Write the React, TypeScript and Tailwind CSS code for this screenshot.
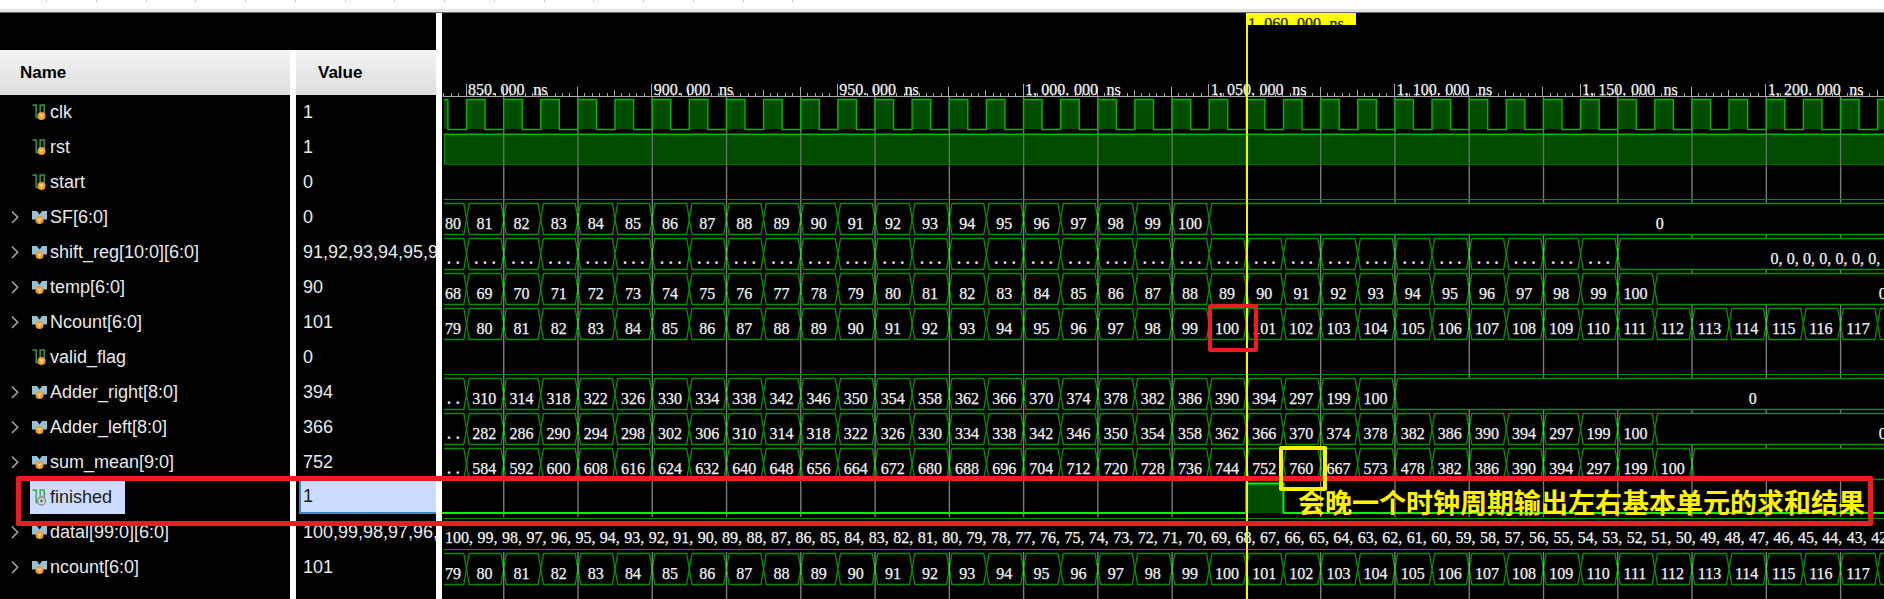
import React from "react";

const PX_PER_NS = 3.7135;
const VIEW_START = 2;
const tx = (t: number) => 24.5 + (t - 850) * PX_PER_NS;
const END = 1293;
const CELL = 8.15;

type Cell = { from: number; to: number; label: string };
type Signal = {
  name: string;
  value: string;
  kind: "bit" | "bus";
  selected?: boolean;
  wave: React.ReactNode;
};

const GREEN = "#009200";
const BRIGHT = "#00b800";
const FILL = "#004d00";
const gridTimes = Array.from({ length: 22 }, (_, i) => 860 + i * 20);

/* Lays text out on the half-width character grid of the viewer. */
function GridText({ x, y, text, fill = "#f2f2f2" }: { x: number; y: number; text: string; fill?: string }) {
  const runs: { at: number; s: string }[] = [];
  let i = 0;
  for (const m of text.match(/[^,. ]*[,. ]?/g) ?? []) {
    if (!m) continue;
    runs.push({ at: i, s: m });
    i += m.length;
  }
  return (
    <text
      y={y}
      fill={fill}
      stroke={fill}
      strokeWidth="0.25"
      className="font-['Liberation_Serif',serif] text-[16px]"
    >
      {runs.map((r) => (
        <tspan key={r.at} x={x + r.at * CELL}>
          {r.s}
        </tspan>
      ))}
    </text>
  );
}

function GridLines({ height, opacity = 1 }: { height: number; opacity?: number }) {
  return (
    <g fill="#7a7a7a" opacity={opacity}>
      {gridTimes.map((t) => (
        <rect key={t} x={tx(t) - 0.6} y="0" width="1.4" height={height} />
      ))}
    </g>
  );
}

function Row({ children }: { children?: React.ReactNode }) {
  return <svg className="block h-[35px] w-full shrink-0 overflow-hidden">{children}</svg>;
}

function Clock() {
  let edge = `M${VIEW_START} 2.5H${tx(845)}V32.5`;
  const highs: number[] = [];
  for (let t = 850; t < END; t += 10) {
    edge += `H${tx(t)}V2.5H${tx(t + 5)}V32.5`;
    highs.push(t);
  }
  return (
    <Row>
      <GridLines height={35} />
      <rect x={VIEW_START} y="2" width={tx(845) - VIEW_START} height="30" fill={FILL} />
      {highs.map((t) => (
        <rect key={t} x={tx(t)} y="2" width={5 * PX_PER_NS} height="30" fill={FILL} />
      ))}
      <path d={edge} fill="none" stroke={BRIGHT} strokeWidth="1.4" />
    </Row>
  );
}

function High() {
  return (
    <Row>
      <rect x={VIEW_START} y="2" width="100%" height="30" fill={FILL} />
      <rect x={VIEW_START} y="2" width="1" height="30" fill={GREEN} />
      <rect x={VIEW_START} y="32" width="100%" height="1" fill="#006a00" />
      <rect x={VIEW_START} y="1.5" width="100%" height="1.5" fill={BRIGHT} />
      <GridLines height={35} opacity={0.8} />
    </Row>
  );
}

function Low() {
  return (
    <Row>
      <GridLines height={35} />
      <rect x={VIEW_START} y="32" width="100%" height="1" fill={GREEN} />
    </Row>
  );
}

function Pulse({ from, to }: { from: number; to: number }) {
  return (
    <Row>
      <GridLines height={35} />
      <rect x={tx(from)} y="1" width={tx(to) - tx(from)} height="30" fill={FILL} />
      <path
        d={`M0 31H${tx(from)}V1.5H${tx(to)}V31H${tx(END)}`}
        fill="none"
        stroke="#00f400"
        strokeWidth="2"
      />
    </Row>
  );
}

function Bus({ cells }: { cells: Cell[] }) {
  return (
    <Row>
      <GridLines height={35} />
      {cells.map((c) => {
        const first = c.from < 850;
        const a = first ? VIEW_START : tx(c.from);
        const b = tx(c.to);
        const d = first
          ? `M${a} 1.5H${b - 2.7}L${b} 17L${b - 2.7} 32.5H${a}`
          : `M${a} 17L${a + 2.7} 1.5H${b - 2.7}L${b} 17L${b - 2.7} 32.5H${a + 2.7}Z`;
        const w = c.label.length * CELL;
        const x = first ? a + 1 : (a + b) / 2 - w / 2 - 0.5;
        return (
          <g key={c.from}>
            <path d={d} fill="#000" stroke={GREEN} strokeWidth="1.3" />
            {c.label.startsWith(".") ? (
              <text
                y={27}
                fill="#f2f2f2"
                className="font-['Liberation_Serif',serif] text-[16px] font-bold"
              >
                {c.label.split("").map((dot, i) => (
                  <tspan key={i} x={x + 2 + i * 8.7}>
                    {dot}
                  </tspan>
                ))}
              </text>
            ) : (
              <GridText x={x} y={27} text={c.label} />
            )}
          </g>
        );
      })}
      {cells
        .filter((c) => c.to % 20 === 0)
        .map((c) => (
          <rect key={c.to} x={tx(c.to) - 0.6} y="11" width="1.4" height="12" fill="#45d045" />
        ))}
    </Row>
  );
}

function WideBus({ text }: { text: string }) {
  return (
    <Row>
      <rect x={VIEW_START} y="1" width="100%" height="1" fill={GREEN} />
      <rect x={VIEW_START} y="32" width="100%" height="1" fill={GREEN} />
      <GridText x={3} y={26} text={text} />
    </Row>
  );
}

const range = (from: number, count: number, step = 1) =>
  Array.from({ length: count }, (_, i) => String(from + i * step));

function toCells(head: string, labels: string[], tail?: string): Cell[] {
  const cells: Cell[] = [{ from: 840, to: 850, label: head }];
  labels.forEach((label, i) => cells.push({ from: 850 + i * 10, to: 860 + i * 10, label }));
  if (tail !== undefined) cells.push({ from: 850 + labels.length * 10, to: END, label: tail });
  return cells;
}

const counter = toCells("79", range(80, 44));
const countdown = range(100, 70, -1).join(",");

const signals: Signal[] = [
  { name: "clk", value: "1", kind: "bit", wave: <Clock /> },
  { name: "rst", value: "1", kind: "bit", wave: <High /> },
  { name: "start", value: "0", kind: "bit", wave: <Low /> },
  { name: "SF[6:0]", value: "0", kind: "bus", wave: <Bus cells={toCells("80", range(81, 20), "0")} /> },
  {
    name: "shift_reg[10:0][6:0]",
    value: "91,92,93,94,95,96,97",
    kind: "bus",
    wave: <Bus cells={toCells("..", Array(31).fill("..."), "0,0,0,0,0,0,0,0,0,0,0,0")} />,
  },
  { name: "temp[6:0]", value: "90", kind: "bus", wave: <Bus cells={toCells("68", range(69, 32), "0")} /> },
  { name: "Ncount[6:0]", value: "101", kind: "bus", wave: <Bus cells={counter} /> },
  { name: "valid_flag", value: "0", kind: "bit", wave: <Low /> },
  {
    name: "Adder_right[8:0]",
    value: "394",
    kind: "bus",
    wave: <Bus cells={toCells("..", [...range(310, 22, 4), "297", "199", "100"], "0")} />,
  },
  {
    name: "Adder_left[8:0]",
    value: "366",
    kind: "bus",
    wave: <Bus cells={toCells("..", [...range(282, 29, 4), "297", "199", "100"], "0")} />,
  },
  {
    name: "sum_mean[9:0]",
    value: "752",
    kind: "bus",
    wave: (
      <Bus
        cells={toCells(
          "..",
          [...range(584, 23, 8), "667", "573", "478", "382", "386", "390", "394", "297", "199", "100"],
          "0"
        )}
      />
    ),
  },
  { name: "finished", value: "1", kind: "bit", selected: true, wave: <Pulse from={1060} to={1070} /> },
  { name: "datal[99:0][6:0]", value: "100,99,98,97,96,95", kind: "bus", wave: <WideBus text={countdown} /> },
  { name: "ncount[6:0]", value: "101", kind: "bus", wave: <Bus cells={counter} /> },
];

function Badge({ cx, cy }: { cx: number; cy: number }) {
  return (
    <g>
      <circle cx={cx} cy={cy} r="4" fill="#f39a2d" />
      <path
        d={`M${cx - 1.6} ${cy - 1.6}L${cx} ${cy + 0.4}L${cx + 1.6} ${cy - 1.6}M${cx} ${cy + 0.4}V${cy + 2.2}`}
        stroke="#ffe9c4"
        strokeWidth="1.1"
        fill="none"
      />
    </g>
  );
}

function BitIcon({ selected }: { selected?: boolean }) {
  return (
    <svg viewBox="0 0 16 18" className="h-[18px] w-4 shrink-0" aria-hidden="true">
      <path
        d="M0.5 2.2H4.2V14.5H8.2V2.2H12.2V11"
        fill="none"
        stroke={selected ? "#4fae62" : "#2f8a3e"}
        strokeWidth="1.7"
      />
      {selected ? (
        <g>
          <circle cx="9.5" cy="13" r="4" fill="#d6d6d6" stroke="#8c8c8c" strokeWidth="1.3" />
          <circle cx="9.5" cy="13" r="1.4" fill="#6a6a6a" />
        </g>
      ) : (
        <Badge cx={9.5} cy={13} />
      )}
    </svg>
  );
}

function BusIcon() {
  return (
    <svg viewBox="0 0 16 18" className="h-[18px] w-4 shrink-0" aria-hidden="true">
      <path d="M0 3H5L7.5 6.5L10 3H15V11.5H0Z" fill="#93c1d8" />
      <Badge cx={7.5} cy={12} />
    </svg>
  );
}

function SignalTable() {
  return (
    <table className="w-full grow table-fixed border-separate border-spacing-0 font-['Liberation_Sans',sans-serif] text-[18px] leading-[22px] text-[#e9e9e9]">
      <thead>
        <tr className="h-[45px] text-left text-[17px] text-black">
          <th className="w-[296px] border-r-[6px] border-white bg-linear-to-b from-[#f3f3f3] to-[#dddee0] p-0 pl-5 font-bold">
            Name
          </th>
          <th className="bg-linear-to-b from-[#f3f3f3] to-[#dddee0] p-0 pl-[22px] font-bold">Value</th>
        </tr>
      </thead>
      <tbody>
        {signals.map((s) => (
          <tr key={s.name} className="h-[35px]">
            <td className="border-r-[6px] border-white p-0">
              <div className="flex h-[35px] items-center pb-px">
                <div className="flex w-[30px] shrink-0 justify-center">
                  {s.kind === "bus" && (
                    <button type="button" aria-label={`Expand ${s.name}`} className="block">
                      <svg viewBox="0 0 10 14" className="h-[14px] w-[10px]">
                        <path d="M2 1.5L7.7 7.3L2 13" fill="none" stroke="#a8a8a8" strokeWidth="1.5" />
                      </svg>
                    </button>
                  )}
                </div>
                <div
                  className={
                    s.selected
                      ? "flex h-[34px] w-[95px] items-center gap-0.5 bg-[#cbdcfe] pl-0.5 text-[#1b1b1b]"
                      : "flex items-center gap-0.5 pl-0.5"
                  }
                >
                  {s.kind === "bit" ? <BitIcon selected={s.selected} /> : <BusIcon />}
                  <span className="pb-px">{s.name}</span>
                </div>
              </div>
            </td>
            <td className="p-0">
              <div
                className={
                  s.selected
                    ? "mb-px ml-[3px] flex h-[34px] items-center overflow-hidden border-b-2 border-l-2 border-[#3f86bb] bg-[#cbdcfe] pl-0.5 text-[#1b1b1b]"
                    : "flex h-[35px] items-center overflow-hidden pb-0.5 pl-[7px]"
                }
              >
                {s.value}
              </div>
            </td>
          </tr>
        ))}
        <tr>
          <td className="border-r-[6px] border-white p-0" />
          <td className="p-0" />
        </tr>
      </tbody>
    </table>
  );
}

function Ruler() {
  const ticks: React.ReactNode[] = [];
  for (let t = 844; t <= END; t += 2) {
    const top = t % 50 === 0 ? 71 : t % 20 === 0 ? 74 : t % 10 === 0 ? 77 : 80;
    ticks.push(<rect key={t} x={Math.round(tx(t)) - 1} y={top} width="1" height={84 - top} fill="#a8a8a8" />);
  }
  const labels = Array.from({ length: 9 }, (_, i) => 850 + i * 50);
  return (
    <svg className="block h-[84px] w-full shrink-0 overflow-hidden">
      {ticks}
      <rect x={VIEW_START} y="83" width="100%" height="1" fill="#a8a8a8" />
      {labels.map((t) => (
        <GridText
          key={t}
          x={tx(t) + 1.5}
          y={82}
          text={`${t >= 1000 ? `1,${String(t - 1000).padStart(3, "0")}` : t}.000 ns`}
        />
      ))}
    </svg>
  );
}

export default function App() {
  return (
    <div className="relative flex min-h-screen flex-col overflow-hidden bg-black">
      <header className="h-[13px] shrink-0 border-b border-[#6d6d6d] bg-white">
        <svg className="block h-3 w-full">
          {Array.from({ length: 16 }, (_, i) => (
            <rect key={i} x={46 + Math.round(i * 49.75)} y="0" width="1" height="2" fill="#c9c9c9" />
          ))}
          <rect x="0" y="9" width="100%" height="3" fill="#e4e4e6" />
        </svg>
      </header>
      <main className="flex grow">
        <section className="flex w-[436px] shrink-0 flex-col pt-[37px]" aria-label="Signals">
          <SignalTable />
        </section>
        <div className="w-[6px] shrink-0 bg-white" />
        <section className="relative flex min-w-0 grow flex-col overflow-hidden" aria-label="Waveform">
          <Ruler />
          {signals.map((s) => (
            <React.Fragment key={s.name}>{s.wave}</React.Fragment>
          ))}
          <svg className="block h-3 w-full grow">
            <GridLines height={600} />
          </svg>
          <div className="absolute inset-y-0 left-[804px] w-[2px] bg-[#f5f500]" />
          <svg className="absolute top-0 left-[804px] h-3 w-[110px] overflow-hidden bg-[#ffff00]">
            <GridText x={2} y={16} text="1,060.000 ns" fill="#1a1a00" />
          </svg>
          <div className="absolute top-[291px] left-[766px] h-12 w-[50px] rounded-xs border-4 border-[#ed1c24]" />
        </section>
      </main>
      <div className="absolute top-[476px] right-[11px] left-4 h-[50px] rounded-xs border-[5px] border-[#ed1c24]" />
      <div className="absolute top-[446px] left-[1279px] h-[45px] w-12 rounded-xs border-4 border-[#fff200]" />
      <p className="absolute top-[482px] left-[1298px] text-[27px] leading-10 font-bold whitespace-nowrap text-[#fff200] font-['Noto_Sans_CJK_SC',sans-serif]">
        会晚一个时钟周期输出左右基本单元的求和结果
      </p>
    </div>
  );
}
